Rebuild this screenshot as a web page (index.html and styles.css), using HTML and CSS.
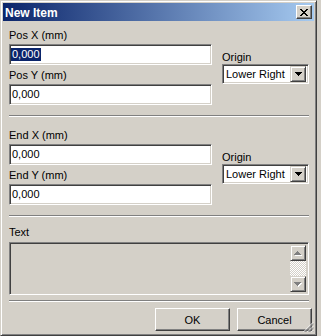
FILE: index.html
```
<!DOCTYPE html>
<html>
    <head>
        <meta charset="utf-8">
        <title>New Item</title>
        <link rel="stylesheet" href="styles.css">
    </head>
    <body>
        <div class="window">
            <div class="titlebar">
                <span class="title">New Item</span>
                <span class="close">
                    <svg width="8" height="7" viewBox="0 0 8 7"><path fill="#000" d="M0 0h2v1H0z M6 0h2v1H6z M1 1h2v1H1z M5 1h2v1H5z M2 2h4v1H2z M3 3h2v1H3z M2 4h4v1H2z M1 5h2v1H1z M5 5h2v1H5z M0 6h2v1H0z M6 6h2v1H6z"/></svg>
                </span>
            </div>

            <div class="client">
                <div class="group">
                    <div class="fields">
                        <div class="label">Pos X (mm)</div>
                        <div class="edit"><span class="selected">0,000</span></div>
                        <div class="label second">Pos Y (mm)</div>
                        <div class="edit">0,000</div>
                    </div>
                    <div class="origin">
                        <div class="label">Origin</div>
                        <div class="combo">
                            <span class="combo-text">Lower Right</span>
                            <span class="drop">
                                <svg width="7" height="4" viewBox="0 0 7 4"><path fill="#000" d="M0 0h7v1H0z M1 1h5v1H1z M2 2h3v1H2z M3 3h1v1H3z"/></svg>
                            </span>
                        </div>
                    </div>
                </div>

                <div class="sep"></div>

                <div class="group">
                    <div class="fields">
                        <div class="label">End X (mm)</div>
                        <div class="edit">0,000</div>
                        <div class="label second">End Y (mm)</div>
                        <div class="edit">0,000</div>
                    </div>
                    <div class="origin">
                        <div class="label">Origin</div>
                        <div class="combo">
                            <span class="combo-text">Lower Right</span>
                            <span class="drop">
                                <svg width="7" height="4" viewBox="0 0 7 4"><path fill="#000" d="M0 0h7v1H0z M1 1h5v1H1z M2 2h3v1H2z M3 3h1v1H3z"/></svg>
                            </span>
                        </div>
                    </div>
                </div>

                <div class="sep"></div>

                <div class="label text-label">Text</div>
                <div class="memo">
                    <div class="vscroll">
                        <span class="sbtn">
                            <svg width="8" height="5" viewBox="0 0 8 5"><path fill="#fff" d="M4 1h1v1H4z M3 2h3v1H3z M2 3h5v1H2z M1 4h7v1H1z"/><path fill="#808080" d="M3 0h1v1H3z M2 1h3v1H2z M1 2h5v1H1z M0 3h7v1H0z"/></svg>
                        </span>
                        <span class="track"></span>
                        <span class="sbtn">
                            <svg width="8" height="5" viewBox="0 0 8 5"><path fill="#fff" d="M1 1h7v1H1z M2 2h5v1H2z M3 3h3v1H3z M4 4h1v1H4z"/><path fill="#808080" d="M0 0h7v1H0z M1 1h5v1H1z M2 2h3v1H2z M3 3h1v1H3z"/></svg>
                        </span>
                    </div>
                </div>

                <div class="sep bottom-sep"></div>

                <div class="buttons">
                    <button class="btn">OK</button>
                    <button class="btn">Cancel</button>
                </div>
            </div>

            <svg class="grip" width="11" height="11" viewBox="0 0 11 11">
                <path stroke="#fff" d="M10 0.5L0.5 10 M10 4.5L4.5 10 M10 8.5L8.5 10" fill="none"/>
                <path stroke="#808080" d="M10 1.5L1.5 10 M10 2.5L2.5 10 M10 5.5L5.5 10 M10 6.5L6.5 10 M10 9.5L9.5 10" fill="none"/>
            </svg>
        </div>
    </body>
</html>
```

FILE: styles.css
```
body{
    margin: 0;
    background: #d4d0c8;
    font-family: "Liberation Sans", Arial, sans-serif;
    font-size: 11px;
    color: #000000;
}

.window{
    position: relative;
    width: 317px;
    height: 336px;
    box-sizing: border-box;
    padding: 2px;
    border: 1px solid;
    border-color: #d4d0c8 #404040 #404040 #d4d0c8;
    box-shadow: inset 1px 1px #ffffff, inset -1px -1px #808080;
    background: #d4d0c8;
    display: flex;
    flex-direction: column;
}

.titlebar{
    height: 18px;
    display: flex;
    align-items: center;
    justify-content: space-between;
    background: linear-gradient(to right, #0a246a, #a6caf0);
    padding-left: 2px;
}

.title{
    color: #ffffff;
    font-weight: bold;
    font-size: 12px;
    padding-top: 1px;
}

.close{
    width: 16px;
    height: 14px;
    box-sizing: border-box;
    margin-right: 2px;
    border: 1px solid;
    border-color: #ffffff #404040 #404040 #ffffff;
    box-shadow: inset -1px -1px #808080;
    background: #d4d0c8;
    display: flex;
    align-items: center;
    justify-content: center;
}

.client{
    flex: 1;
    padding: 8px 5px 0 6px;
    display: flex;
    flex-direction: column;
}

.group{
    display: flex;
    align-items: center;
    gap: 10px;
    margin-bottom: 10px;
}

.fields{
    width: 203px;
    display: flex;
    flex-direction: column;
}

.label{
    height: 13px;
    line-height: 13px;
    margin-bottom: 2px;
}

.label.second{
    margin-top: 4px;
}

.edit, .combo, .memo{
    box-sizing: border-box;
    border: 1px solid;
    border-color: #808080 #ffffff #ffffff #808080;
    box-shadow: inset 1px 1px #404040, inset -1px -1px #d4d0c8;
}

.edit{
    height: 21px;
    line-height: 19px;
    padding-left: 2px;
    background: #ffffff;
}

.selected{
    display: inline-block;
    line-height: 13px;
    padding: 0 1px;
    margin-left: -1px;
    background: #0a246a;
    color: #ffffff;
}

.origin{
    width: 87px;
    display: flex;
    flex-direction: column;
}

.origin .label{
    margin-bottom: 0;
}

.combo{
    height: 20px;
    padding: 2px;
    background: #ffffff;
    display: flex;
    align-items: center;
}

.combo-text{
    flex: 1;
    padding-left: 1px;
}

.drop, .sbtn{
    box-sizing: border-box;
    border: 1px solid;
    border-color: #d4d0c8 #404040 #404040 #d4d0c8;
    box-shadow: inset 1px 1px #ffffff, inset -1px -1px #808080;
    background: #d4d0c8;
    display: flex;
    align-items: center;
    justify-content: center;
}

.drop{
    width: 16px;
    height: 16px;
}

.sep{
    height: 1px;
    border-top: 1px solid #808080;
    border-bottom: 1px solid #ffffff;
    height: 0;
    margin-bottom: 12px;
}

.text-label{
    margin-top: -3px;
    margin-bottom: 3px;
}

.memo{
    height: 53px;
    padding: 2px;
    background: #d4d0c8;
    display: flex;
    justify-content: flex-end;
}

.vscroll{
    width: 16px;
    display: flex;
    flex-direction: column;
}

.sbtn{
    height: 16px;
}

.track{
    flex: 1;
    background: repeating-conic-gradient(#ffffff 0 25%, #d4d0c8 0 50%) 0 0 / 2px 2px;
}

.bottom-sep{
    margin-top: 5px;
    margin-bottom: 6px;
}

.buttons{
    display: flex;
    justify-content: flex-end;
    gap: 7px;
    margin-right: -3px;
}

.btn{
    width: 75px;
    height: 23px;
    padding: 0;
    font-family: "Liberation Sans", Arial, sans-serif;
    font-size: 11px;
    color: #000000;
    background: #d4d0c8;
    border: 1px solid;
    border-color: #ffffff #404040 #404040 #ffffff;
    box-shadow: inset -1px -1px #808080;
}

.grip{
    position: absolute;
    right: 2px;
    bottom: 2px;
}
```
